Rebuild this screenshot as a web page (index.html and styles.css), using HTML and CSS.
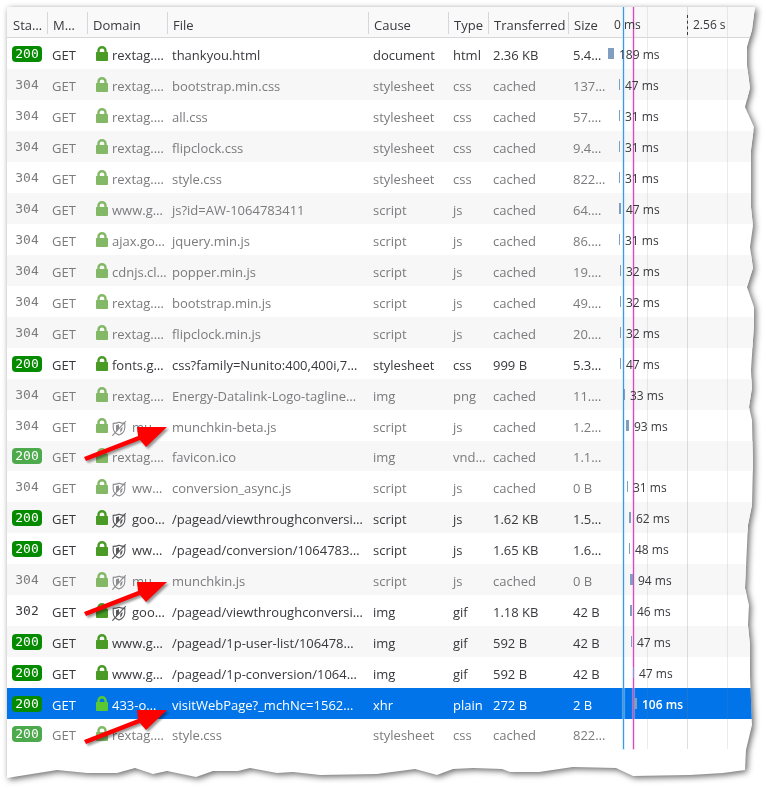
FILE: index.html
```
<!DOCTYPE html>
<html lang="en">
<head>
<meta charset="utf-8">
<title>Network</title>
<link rel="stylesheet" href="styles.css">
</head>
<body>
<svg class="symbols" aria-hidden="true">
  <symbol id="lock" viewBox="0 0 12 15">
    <path d="M.5 6h11q.5 0 .5.500V14q0 1-1 1H1q-1 0-1-1V6.500q0-.5.500-.500z" fill="currentColor"/>
    <path d="M2.500 7V4.500a3.500 3.300 0 0 1 7 0V7" fill="none" stroke="currentColor" stroke-width="2.400"/>
  </symbol>
  <symbol id="shield" viewBox="0 0 14 15">
    <path d="M7 1.200C5 2.100 3 2.400 1.200 2.400V6.500C1.200 10 3.300 12.600 7 14c3.700-1.400 5.800-4 5.800-7.500V2.400C11 2.400 9 2.100 7 1.200z" fill="none" stroke="currentColor" stroke-width="1.100"/>
    <path d="M4 4.300L7 3.300V7.500L4 10.700z M8.300 8l2.200-2.300C10.600 8.500 9.800 10.500 8.300 11.500z" fill="currentColor"/>
    <path d="M13.700.3L.3 14.700" stroke="currentColor" stroke-width="1.200"/>
  </symbol>
  <symbol id="arrow" viewBox="0 0 90 46">
    <path d="M4 37L58 16L57 7H87L66 27L60 20L6 41z" fill="#f00"/>
  </symbol>
</svg>
<div class="paper">
<main class="sheet">
<table class="requests">
  <thead>
    <tr>
      <th class="status">Sta…</th>
      <th class="method">M…</th>
      <th class="domain">Domain</th>
      <th class="file">File</th>
      <th class="cause">Cause</th>
      <th class="type">Type</th>
      <th class="transferred">Transferred</th>
      <th class="size">Size</th>
      <th class="waterfall"><div class="scale"><span>0 ms</span><span class="tick">2.56 s</span></div></th>
    </tr>
  </thead>
  <tbody>
    <tr>
      <td><span class="code ok">200</span></td><td>GET</td>
      <td><svg class="lock"><use href="#lock"/></svg>rextag.…</td><td>thankyou.html</td>
      <td>document</td><td>html</td><td>2.36 KB</td><td>5.4…</td>
      <td class="timing"><div class="wait"><i class="bar" style="margin-left:0px;width:6px"></i>189 ms</div></td>
    </tr>
    <tr class="cached">
      <td><span class="code">304</span></td><td>GET</td>
      <td><svg class="lock"><use href="#lock"/></svg>rextag.…</td><td>bootstrap.min.css</td>
      <td>stylesheet</td><td>css</td><td>cached</td><td>137…</td>
      <td class="timing"><div class="wait"><i class="bar" style="margin-left:11px;width:1px"></i>47 ms</div></td>
    </tr>
    <tr class="cached">
      <td><span class="code">304</span></td><td>GET</td>
      <td><svg class="lock"><use href="#lock"/></svg>rextag.…</td><td>all.css</td>
      <td>stylesheet</td><td>css</td><td>cached</td><td>57.…</td>
      <td class="timing"><div class="wait"><i class="bar" style="margin-left:11px;width:1px"></i>31 ms</div></td>
    </tr>
    <tr class="cached">
      <td><span class="code">304</span></td><td>GET</td>
      <td><svg class="lock"><use href="#lock"/></svg>rextag.…</td><td>flipclock.css</td>
      <td>stylesheet</td><td>css</td><td>cached</td><td>9.4…</td>
      <td class="timing"><div class="wait"><i class="bar" style="margin-left:11px;width:1px"></i>31 ms</div></td>
    </tr>
    <tr class="cached">
      <td><span class="code">304</span></td><td>GET</td>
      <td><svg class="lock"><use href="#lock"/></svg>rextag.…</td><td>style.css</td>
      <td>stylesheet</td><td>css</td><td>cached</td><td>822…</td>
      <td class="timing"><div class="wait"><i class="bar" style="margin-left:11px;width:1px"></i>31 ms</div></td>
    </tr>
    <tr class="cached">
      <td><span class="code">304</span></td><td>GET</td>
      <td><svg class="lock"><use href="#lock"/></svg>www.g…</td><td>js?id=AW-1064783411</td>
      <td>script</td><td>js</td><td>cached</td><td>64.…</td>
      <td class="timing"><div class="wait"><i class="bar" style="margin-left:11px;width:2px"></i>47 ms</div></td>
    </tr>
    <tr class="cached">
      <td><span class="code">304</span></td><td>GET</td>
      <td><svg class="lock"><use href="#lock"/></svg>ajax.go…</td><td>jquery.min.js</td>
      <td>script</td><td>js</td><td>cached</td><td>86.…</td>
      <td class="timing"><div class="wait"><i class="bar" style="margin-left:11px;width:1px"></i>31 ms</div></td>
    </tr>
    <tr class="cached">
      <td><span class="code">304</span></td><td>GET</td>
      <td><svg class="lock"><use href="#lock"/></svg>cdnjs.cl…</td><td>popper.min.js</td>
      <td>script</td><td>js</td><td>cached</td><td>19.…</td>
      <td class="timing"><div class="wait"><i class="bar" style="margin-left:12px;width:1px"></i>32 ms</div></td>
    </tr>
    <tr class="cached">
      <td><span class="code">304</span></td><td>GET</td>
      <td><svg class="lock"><use href="#lock"/></svg>rextag.…</td><td>bootstrap.min.js</td>
      <td>script</td><td>js</td><td>cached</td><td>49.…</td>
      <td class="timing"><div class="wait"><i class="bar" style="margin-left:12px;width:1px"></i>32 ms</div></td>
    </tr>
    <tr class="cached">
      <td><span class="code">304</span></td><td>GET</td>
      <td><svg class="lock"><use href="#lock"/></svg>rextag.…</td><td>flipclock.min.js</td>
      <td>script</td><td>js</td><td>cached</td><td>20.…</td>
      <td class="timing"><div class="wait"><i class="bar" style="margin-left:12px;width:1px"></i>32 ms</div></td>
    </tr>
    <tr>
      <td><span class="code ok">200</span></td><td>GET</td>
      <td><svg class="lock"><use href="#lock"/></svg>fonts.g…</td><td>css?family=Nunito:400,400i,7…</td>
      <td>stylesheet</td><td>css</td><td>999 B</td><td>5.3…</td>
      <td class="timing"><div class="wait"><i class="bar" style="margin-left:12px;width:1px"></i>47 ms</div></td>
    </tr>
    <tr class="cached">
      <td><span class="code">304</span></td><td>GET</td>
      <td><svg class="lock"><use href="#lock"/></svg>rextag.…</td><td>Energy-Datalink-Logo-tagline…</td>
      <td>img</td><td>png</td><td>cached</td><td>11.…</td>
      <td class="timing"><div class="wait"><i class="bar" style="margin-left:16px;width:1px"></i>33 ms</div></td>
    </tr>
    <tr class="cached">
      <td><span class="code">304</span></td><td>GET</td>
      <td><svg class="lock"><use href="#lock"/></svg><svg class="shield"><use href="#shield"/></svg>mu…</td><td>munchkin-beta.js</td>
      <td>script</td><td>js</td><td>cached</td><td>1.2…</td>
      <td class="timing"><div class="wait"><i class="bar" style="margin-left:18px;width:3px"></i>93 ms</div></td>
    </tr>
    <tr class="cached short">
      <td><span class="code ok">200</span></td><td>GET</td>
      <td><svg class="lock"><use href="#lock"/></svg>rextag.…</td><td>favicon.ico</td>
      <td>img</td><td>vnd…</td><td>cached</td><td>1.1…</td>
      <td class="timing"></td>
    </tr>
    <tr class="cached">
      <td><span class="code">304</span></td><td>GET</td>
      <td><svg class="lock"><use href="#lock"/></svg><svg class="shield"><use href="#shield"/></svg>ww…</td><td>conversion_async.js</td>
      <td>script</td><td>js</td><td>cached</td><td>0 B</td>
      <td class="timing"><div class="wait"><i class="bar" style="margin-left:19px;width:1px"></i>31 ms</div></td>
    </tr>
    <tr>
      <td><span class="code ok">200</span></td><td>GET</td>
      <td><svg class="lock"><use href="#lock"/></svg><svg class="shield"><use href="#shield"/></svg>goo…</td><td>/pagead/viewthroughconversi…</td>
      <td>script</td><td>js</td><td>1.62 KB</td><td>1.5…</td>
      <td class="timing"><div class="wait"><i class="bar" style="margin-left:21px;width:2px"></i>62 ms</div></td>
    </tr>
    <tr>
      <td><span class="code ok">200</span></td><td>GET</td>
      <td><svg class="lock"><use href="#lock"/></svg><svg class="shield"><use href="#shield"/></svg>ww…</td><td>/pagead/conversion/1064783…</td>
      <td>script</td><td>js</td><td>1.65 KB</td><td>1.6…</td>
      <td class="timing"><div class="wait"><i class="bar" style="margin-left:21px;width:1px"></i>48 ms</div></td>
    </tr>
    <tr class="cached">
      <td><span class="code">304</span></td><td>GET</td>
      <td><svg class="lock"><use href="#lock"/></svg><svg class="shield"><use href="#shield"/></svg>mu…</td><td>munchkin.js</td>
      <td>script</td><td>js</td><td>cached</td><td>0 B</td>
      <td class="timing"><div class="wait"><i class="bar" style="margin-left:22px;width:3px"></i>94 ms</div></td>
    </tr>
    <tr>
      <td><span class="code">302</span></td><td>GET</td>
      <td><svg class="lock"><use href="#lock"/></svg><svg class="shield"><use href="#shield"/></svg>goo…</td><td>/pagead/viewthroughconversi…</td>
      <td>img</td><td>gif</td><td>1.18 KB</td><td>42 B</td>
      <td class="timing"><div class="wait"><i class="bar" style="margin-left:22px;width:2px"></i>46 ms</div></td>
    </tr>
    <tr>
      <td><span class="code ok">200</span></td><td>GET</td>
      <td><svg class="lock"><use href="#lock"/></svg>www.g…</td><td>/pagead/1p-user-list/106478…</td>
      <td>img</td><td>gif</td><td>592 B</td><td>42 B</td>
      <td class="timing"><div class="wait"><i class="bar" style="margin-left:23px;width:1px"></i>47 ms</div></td>
    </tr>
    <tr>
      <td><span class="code ok">200</span></td><td>GET</td>
      <td><svg class="lock"><use href="#lock"/></svg>www.g…</td><td>/pagead/1p-conversion/1064…</td>
      <td>img</td><td>gif</td><td>592 B</td><td>42 B</td>
      <td class="timing"><div class="wait"><i class="bar" style="margin-left:25px;width:1px"></i>47 ms</div></td>
    </tr>
    <tr class="selected">
      <td><span class="code ok">200</span></td><td>GET</td>
      <td><svg class="lock"><use href="#lock"/></svg>433-o…</td><td>visitWebPage?_mchNc=1562…</td>
      <td>xhr</td><td>plain</td><td>272 B</td><td>2 B</td>
      <td class="timing"><div class="wait"><i class="bar" style="margin-left:26px;width:3px"></i>106 ms</div></td>
    </tr>
    <tr class="cached short">
      <td><span class="code ok">200</span></td><td>GET</td>
      <td><svg class="lock"><use href="#lock"/></svg>rextag.…</td><td>style.css</td>
      <td>stylesheet</td><td>css</td><td>cached</td><td>822…</td>
      <td class="timing"></td>
    </tr>
  </tbody>
</table>
<div class="marker dom-loaded"></div>
<div class="marker page-load"></div>
<svg class="arrow beta"><use href="#arrow"/></svg>
<svg class="arrow munchkin"><use href="#arrow"/></svg>
<svg class="arrow visit"><use href="#arrow"/></svg>
</main>
</div>
</body>
</html>
```
FILE: styles.css
```
* {
  box-sizing: border-box;
}
body {
  margin: 0;
  padding: 7px 11px 11px 7px;
  background: #fff;
  color: #38383d;
  font: 13px/20px "Open Sans", "Noto Sans", sans-serif;
}
.symbols {
  position: absolute;
  width: 0;
  height: 0;
}
/* the shadow has to sit outside the clipped sheet */
.paper {
  filter: drop-shadow(2px 2px 3px rgba(0,0,0,.6));
}
.sheet {
  position: relative;
  padding-bottom: 29px;
  background: #fff;
  clip-path: polygon(0 0, 100% 0,
    calc(100% - 3px) 23px, calc(100% - 8px) 40px, calc(100% - 8px) 58px,
    calc(100% - 5px) 81px, calc(100% - 10px) 100px, calc(100% - 1px) 120px,
    calc(100% - 4px) 143px, calc(100% - 4px) 200px, calc(100% - 2px) 219px,
    calc(100% - 5px) 240px, calc(100% - 2px) 261px, calc(100% - 8px) 280px,
    calc(100% - 1px) 300px, calc(100% - 1px) 318px, calc(100% - 4px) 363px,
    calc(100% - 3px) 381px, calc(100% - 6px) 400px, calc(100% - 3px) 413px,
    calc(100% - 2px) 458px, calc(100% - 3px) 498px, calc(100% - 7px) 518px,
    calc(100% - 10px) 581px, calc(100% - 6px) 598px, calc(100% - 7px) 618px,
    calc(100% - 5px) 638px, calc(100% - 5px) 668px, calc(100% - 3px) 718px,
    calc(100% - 9px) 743px, calc(100% - 10px) calc(100% - 8px),
    716px calc(100% - 5px), 683px calc(100% - 3px), 626px calc(100% - 2px),
    609px calc(100% - 10px), 566px calc(100% - 11px), 532px calc(100% - 6px),
    503px calc(100% - 6px), 495px calc(100% - 9px), 466px calc(100% - 10px),
    446px calc(100% - 9px), 430px calc(100% - 3px), 408px calc(100% - 9px),
    370px calc(100% - 4px), 313px calc(100% - 3px), 286px calc(100% - 6px),
    270px calc(100% - 5px), 243px calc(100% - 10px), 231px calc(100% - 7px),
    206px calc(100% - 7px), 189px calc(100% - 1px), 160px calc(100% - 7px),
    146px calc(100% - 4px), 128px calc(100% - 10px), 110px calc(100% - 5px),
    80px calc(100% - 5px), 50px calc(100% - 8px), 0 100%);
}

.requests {
  width: 100%;
  table-layout: fixed;
  border-collapse: separate;
  border-spacing: 0;
}
.status, .method, .type, .size { width: 40px; }
.domain, .cause, .transferred { width: 80px; }
.waterfall { width: 147px; }
.file { width: auto; }

th {
  height: 31px;
  padding: 6px 0 0 6px;
  border-bottom: 1px solid #d7d7db;
  background: #f9f9fa linear-gradient(#d7d7db, #d7d7db) no-repeat left 5px / 1px 22px;
  font-weight: normal;
  text-align: left;
  white-space: nowrap;
}
.status {
  background-image: none;
}
td {
  height: 31px;
  padding: 2px 0 0 5px;
  overflow: hidden;
  white-space: nowrap;
}
.short td {
  height: 30px;
}
tbody tr:nth-child(even) {
  background: #f7f7f7;
}
.cached {
  color: #7b7b7e;
}
.requests .selected {
  background: #0074e8;
  color: #fff;
}

.code {
  display: block;
  width: 30px;
  height: 16px;
  margin-bottom: 2px;
  border-radius: 4px;
  font: 13px/16px "DejaVu Sans Mono", monospace;
  text-align: center;
}
.ok {
  background: #058b00;
  color: #fff;
}
.cached .ok {
  background: #4caa4c;
}

.lock {
  width: 12px;
  height: 15px;
  margin: 0 4px;
  color: #4a9a26;
  vertical-align: -1px;
}
.cached .lock {
  color: #82b866;
}
.selected .lock {
  color: #5ac832;
}
.shield {
  width: 14px;
  height: 15px;
  margin-right: 6px;
  color: #58585c;
  vertical-align: -4px;
}
.cached .shield {
  color: #8c8c90;
}

.waterfall, .timing {
  background-image:
    linear-gradient(#80808028, #80808028),
    linear-gradient(#80808040, #80808040),
    linear-gradient(#80808028, #80808028);
  background-position: 39px 0, 79px 0, 119px 0;
  background-size: 1px 100%;
  background-repeat: no-repeat;
}
.waterfall {
  border-left: 0;
}
.scale, .wait {
  position: relative;
  z-index: 1;
  display: flex;
  font-size: 12px;
  font-weight: 500;
}
.scale span {
  width: 73px;
}
.scale span:first-child {
  flex: none;
}
.scale .tick {
  padding-left: 5px;
  border-left: 1px dashed #38383d;
}
.timing {
  padding-left: 0;
  color: #38383d;
}
.selected .timing {
  color: #fff;
}
.selected .wait {
  font-weight: 600;
}
.bar {
  height: 11px;
  margin-top: 3px;
  margin-right: 5px;
  background: #7f9ec0;
}

/* load markers run behind the timing labels */
.marker {
  position: absolute;
  top: 0;
  bottom: 29px;
  width: 1px;
}
.dom-loaded {
  right: 131px;
  background: #4a94d8;
  box-shadow: 0 0 1px 1px #a8dcff80;
}
.page-load {
  right: 121px;
  background: #cf4fb8;
  box-shadow: 0 0 1px 1px #f0b0e480;
}

.arrow {
  position: absolute;
  z-index: 2;
  left: 73px;
  width: 90px;
  height: 46px;
  filter: drop-shadow(2px 2px 1px rgba(0,0,0,.4));
}
.beta { top: 413px; }
.munchkin { top: 568px; }
.visit { top: 696px; }
```
